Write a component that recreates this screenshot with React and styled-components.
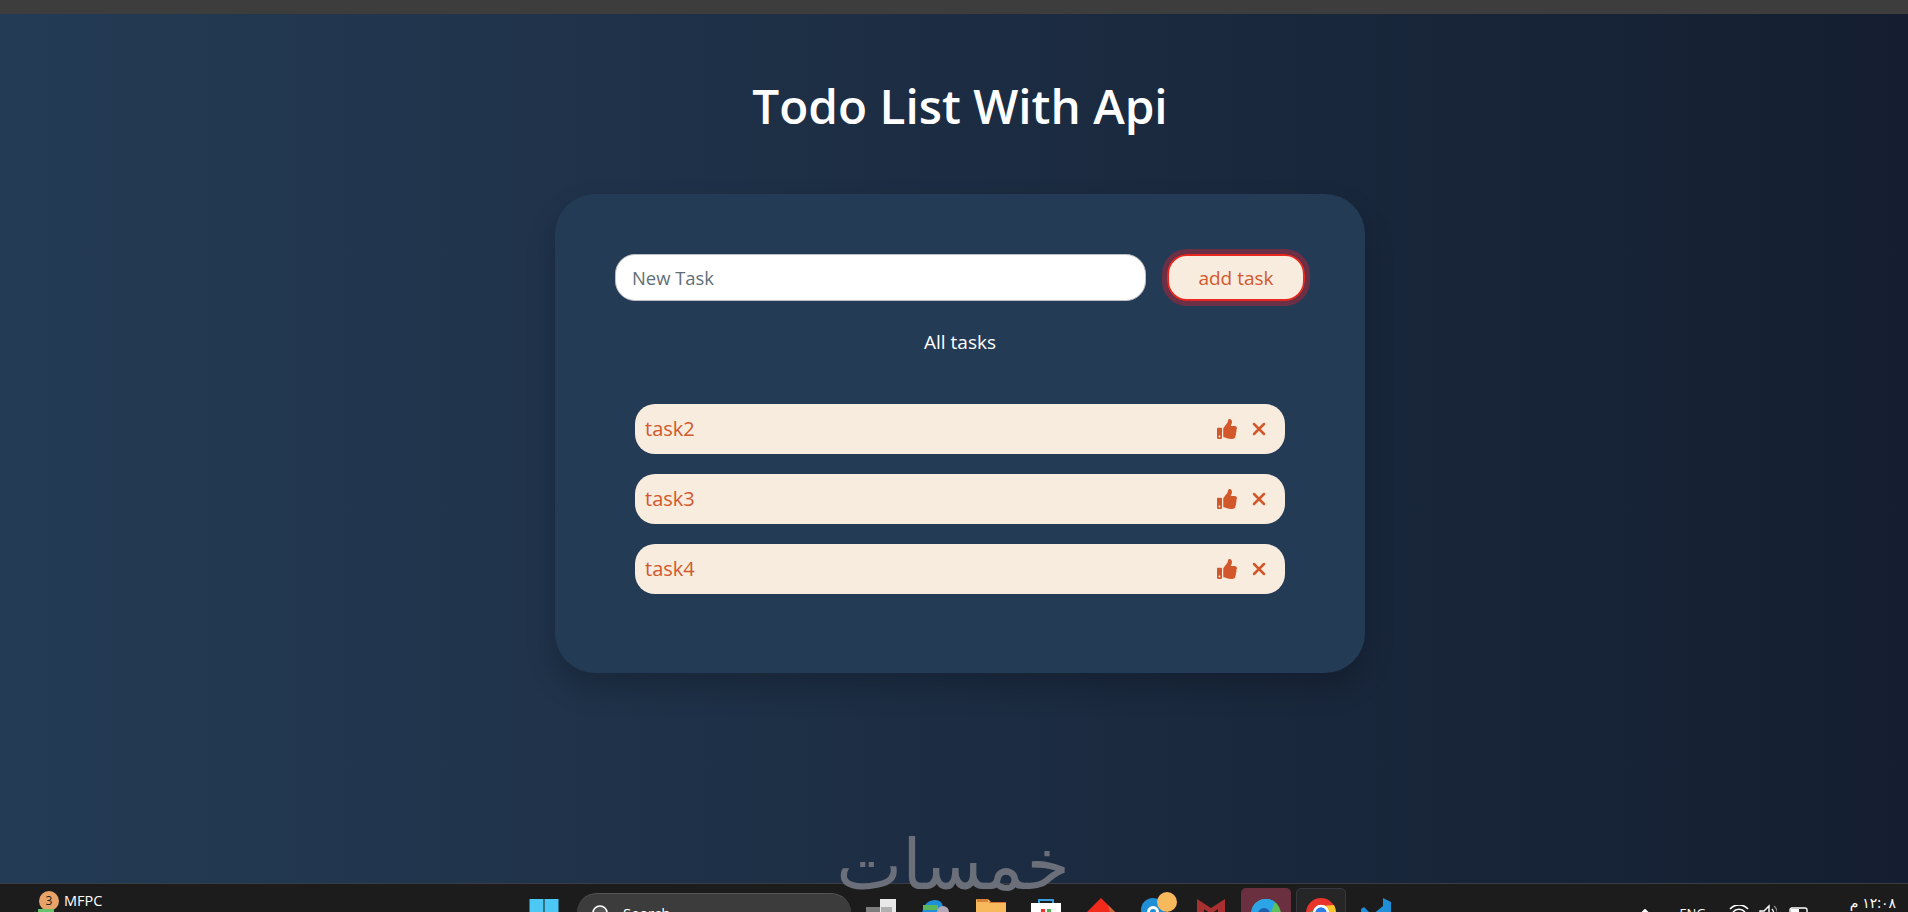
import React from 'react';
import styled, { createGlobalStyle } from 'styled-components';
import { FaThumbsUp } from 'react-icons/fa';
import { X } from 'lucide-react';

const GlobalStyle = createGlobalStyle`
  html, body { margin: 0; padding: 0; height: 100%; overflow: hidden; }
  body { font-family: "Open Sans", "Noto Sans", "Liberation Sans", sans-serif; }
  * { box-sizing: border-box; }
`;

const Page = styled.div`
  height: 912px;
  display: flex;
  flex-direction: column;
  overflow: hidden;
`;

const TopBar = styled.div`
  height: 14px;
  flex: none;
  background: #3c3d3c;
`;

const Main = styled.main`
  flex: 1;
  position: relative;
  display: flex;
  flex-direction: column;
  align-items: center;
  padding-left: 12px;
  background: linear-gradient(to right, #243b55, #141e30);
`;

const Title = styled.h1`
  margin: 59px 0 55px;
  font-size: 47.7px;
  line-height: 66px;
  font-weight: 600;
  color: #fff;
`;

const Card = styled.section`
  width: 810px;
  height: 479px;
  padding: 60px;
  border-radius: 40px;
  background: #243b55;
  box-shadow: 0 15px 30px rgba(0, 0, 0, 0.2);
`;

const Form = styled.form`
  display: flex;
  gap: 21px;
`;

const Input = styled.input`
  width: 531px;
  height: 47px;
  padding: 0 16px;
  border: 1.5px solid #bdbdc2;
  border-radius: 20px;
  background: #fff;
  font: 18.4px "Open Sans", sans-serif;
  &::placeholder { color: #5f6f78; opacity: 1; }
`;

const AddButton = styled.button`
  width: 138px;
  height: 47px;
  border: 2px solid #e8281f;
  border-radius: 20px;
  outline: 5px solid #6b3046;
  background: #f8ecdf;
  color: #d2582c;
  font: 19px "Open Sans", sans-serif;
`;

const Subtitle = styled.h2`
  margin: 28px 0 48px;
  font-size: 19px;
  line-height: 27px;
  font-weight: 400;
  text-align: center;
  color: #fff;
`;

const TaskList = styled.ul`
  margin: 0 20px;
  padding: 0;
  list-style: none;
  display: flex;
  flex-direction: column;
  gap: 20px;
`;

const TaskRow = styled.li`
  height: 50px;
  padding: 0 16px 2px 10px;
  border-radius: 20px;
  background: #f8ecdf;
  display: flex;
  align-items: center;
  justify-content: space-between;
  color: #d2582c;
  font-size: 20px;
`;

const TaskActions = styled.div`
  display: flex;
  align-items: center;
  gap: 12px;
  margin-top: 2px;
`;

const Watermark = styled.div`
  position: absolute;
  left: 829px;
  top: 830px;
  width: 248px;
  text-align: center;
  direction: rtl;
  font-family: "DejaVu Sans", sans-serif;
  font-size: 70px;
  line-height: 70px;
  color: #6b6f7a;
  z-index: 2;
`;

const Taskbar = styled.footer`
  height: 29px;
  flex: none;
  display: flex;
  overflow: hidden;
  background: #1c1c1c;
  border-top: 1px solid #3a3d42;
  color: #fff;
`;

const Weather = styled.div`
  width: 519px;
  flex: none;
  position: relative;
  padding: 8px 0 0 64px;
  font-size: 14.5px;
  line-height: 18px;
`;

const Badge = styled.span`
  position: absolute;
  left: 39px;
  top: 7px;
  width: 20px;
  height: 20px;
  border-radius: 50%;
  background: #e8a468;
  color: #1c1c1c;
  font-size: 12px;
  line-height: 20px;
  text-align: center;
`;

const Centre = styled.div`
  display: flex;
  gap: 5px;
`;

const Slot = styled.div`
  width: 50px;
  height: 40px;
  flex: none;
  margin-top: 4px;
  display: flex;
  justify-content: center;
  align-items: flex-start;
  padding-top: ${p => p.$top ?? 10}px;
  border-radius: 5px;
  border: 1px solid ${p => (p.$tone === 'plain' ? '#363a3e' : 'transparent')};
  background: ${p => (p.$tone === 'active' ? '#6a3040' : p.$tone === 'plain' ? '#262626' : 'none')};
`;

const SearchPill = styled.div`
  width: 274px;
  height: 40px;
  flex: none;
  margin: 9px 0 0 3px;
  padding: 11px 0 0 15px;
  border-radius: 20px;
  border-top: 1px solid #555;
  background: #3c3c3c;
  display: flex;
  align-items: flex-start;
  gap: 15px;
  font-size: 15px;
  line-height: 18px;
`;

const SearchLabel = styled.span`
  margin-top: -1px;
`;

const Tray = styled.div`
  margin-left: auto;
  padding-right: 12px;
  display: flex;
  align-items: flex-start;
`;

const TrayItem = styled.div`
  margin-left: ${p => p.$left}px;
  padding-top: ${p => p.$top}px;
  font-size: 13px;
  line-height: 16px;
`;

const Clock = styled.div`
  margin-left: 41px;
  padding-top: 11px;
  direction: rtl;
  font-family: "Noto Sans", "DejaVu Sans", sans-serif;
  font-size: 14px;
  line-height: 16px;
`;

const tasks = ['task2', 'task3', 'task4'];

function Ic({ w = 30, h = 30, children }) {
  return (
    <svg width={w} height={h} viewBox={`0 0 ${w} ${h}`} style={{ display: 'block', flex: 'none' }}>
      {children}
    </svg>
  );
}

export default function App() {
  return (
    <Page>
      <GlobalStyle />
      <TopBar />
      <Main>
        <Title>Todo List With Api</Title>
        <Card>
          <Form onSubmit={e => e.preventDefault()}>
            <Input placeholder="New Task" />
            <AddButton type="submit">add task</AddButton>
          </Form>
          <Subtitle>All tasks</Subtitle>
          <TaskList>
            {tasks.map(t => (
              <TaskRow key={t}>
                {t}
                <TaskActions>
                  <FaThumbsUp size={20} color="#d2582c" />
                  <X size={20} color="#d2582c" strokeWidth={3} />
                </TaskActions>
              </TaskRow>
            ))}
          </TaskList>
        </Card>
      </Main>
      <Watermark>خمسات</Watermark>
      <Taskbar>
        <Weather>
          <Badge>3</Badge>
          <svg width="24" height="10" viewBox="0 0 24 10" style={{ position: 'absolute', left: 32, top: 24 }}>
            <path d="M0 10 L3 3 L6 10Z" fill="#4caf50" />
            <rect x="6" y="1" width="16" height="9" fill="#63c46b" />
          </svg>
          MFPC
        </Weather>
        <Centre>
          <Slot $top={10}>
            <Ic>
              <rect x="0.5" y="0" width="14" height="14" fill="#4cc8f4" />
              <rect x="15.5" y="0" width="14" height="14" fill="#4cc8f4" />
            </Ic>
          </Slot>
          <SearchPill>
            <Ic w={16} h={16}>
              <circle cx="8" cy="8" r="7" fill="#555" stroke="#fff" strokeWidth="1.6" />
            </Ic>
            <SearchLabel>Search</SearchLabel>
          </SearchPill>
          <Slot $top={10}>
            <Ic>
              <rect x="14" y="0" width="16" height="30" fill="#e8e8e8" />
              <rect x="0" y="8" width="14" height="22" fill="#7c7c7c" />
              <rect x="15" y="8" width="11" height="8" fill="#b0b0b0" />
            </Ic>
          </Slot>
          <Slot $top={11}>
            <Ic w={28}>
              <path d="M0 14 C1 4 7 0 13 0 C18 0 21 3 21 8 L21 14Z" fill="#1f8fd8" />
              <rect x="1" y="5" width="15" height="5" fill="#5bb85c" />
              <rect x="1" y="10" width="15" height="4" fill="#1f8fd8" />
              <circle cx="21" cy="12" r="6" fill="#b4a8b8" />
            </Ic>
          </Slot>
          <Slot $top={10}>
            <Ic>
              <path d="M0 1 Q0 0 1 0 L12 0 L15 3 L30 3 L30 30 L0 30Z" fill="#f8b85c" />
              <rect x="1" y="0" width="11" height="3" fill="#d9823a" />
              <rect x="13" y="3" width="17" height="1" fill="#d9703a" />
            </Ic>
          </Slot>
          <Slot $top={10}>
            <Ic>
              <path d="M8 4 L8 1 L22 1 L22 4" fill="none" stroke="#3aa0e0" strokeWidth="2" />
              <rect x="0" y="4" width="30" height="26" fill="#fff" />
              <rect x="10" y="10" width="4" height="6" fill="#e33" />
              <rect x="16" y="10" width="4" height="6" fill="#4caf50" />
            </Ic>
          </Slot>
          <Slot $top={9}>
            <Ic>
              <path d="M15 0 L30 15 L0 15Z" fill="#f22a1c" />
              <path d="M22 7 L30 15 L24 15Z" fill="#c8683c" />
            </Ic>
          </Slot>
          <Slot $top={3}>
            <Ic w={42} h={34}>
              <circle cx="18" cy="18" r="12" fill="#1f8fd8" />
              <circle cx="18" cy="20" r="6" fill="#fff" />
              <circle cx="18" cy="20" r="3" fill="#1f8fd8" />
              <circle cx="32" cy="10" r="10" fill="#f8b85c" />
            </Ic>
          </Slot>
          <Slot $top={10}>
            <Ic w={28}>
              <path d="M0 0 L14 9 L28 0 L28 30 L21 30 L21 10 L14 15 L7 10 L7 30 L0 30Z" fill="#a83030" />
            </Ic>
          </Slot>
          <Slot $tone="active" $top={10}>
            <Ic>
              <circle cx="15" cy="15" r="15" fill="#5cc05c" />
              <path d="M0 15 A15 15 0 0 1 24 3 L20 13 L20 30 L0 30Z" fill="#2ba5e8" />
              <circle cx="13" cy="15" r="6" fill="#1a5fa8" />
            </Ic>
          </Slot>
          <Slot $tone="plain" $top={9}>
            <Ic>
              <circle cx="15" cy="15" r="15" fill="#e8342a" />
              <path d="M0 15 L9 12 L15 30 L0 30Z" fill="#45a84b" />
              <path d="M15 8 L28 7 A15 15 0 0 1 30 15 L30 30 L20 30Z" fill="#f8c52c" />
              <circle cx="15" cy="15" r="7" fill="#2a7de8" stroke="#fff" strokeWidth="2.5" />
            </Ic>
          </Slot>
          <Slot $top={9}>
            <Ic>
              <path d="M22 0 L30 4 L30 30 L22 30 L22 8 L11 17 L3 9 L0 11 L0 30 L22 30" fill="#1f8fd8" />
            </Ic>
          </Slot>
        </Centre>
        <Tray>
          <TrayItem $left={0} $top={25}>
            <Ic w={16} h={8}>
              <path d="M2 7 L8 1 L14 7" fill="none" stroke="#fff" strokeWidth="2" />
            </Ic>
          </TrayItem>
          <TrayItem $left={26} $top={21}>ENG</TrayItem>
          <TrayItem $left={23} $top={21}>
            <Ic w={20} h={20}>
              <path d="M1 7 A12 12 0 0 1 19 7" fill="none" stroke="#fff" strokeWidth="1.6" transform="translate(0 -3)" />
              <path d="M4 7 A8 8 0 0 1 16 7" fill="none" stroke="#fff" strokeWidth="1.6" />
              <path d="M7 10 A4 4 0 0 1 13 10" fill="none" stroke="#fff" strokeWidth="1.6" />
            </Ic>
          </TrayItem>
          <TrayItem $left={10} $top={20}>
            <Ic w={18} h={20}>
              <path d="M1 7 L5 7 L10 2 L10 16 L5 11 L1 11Z" fill="none" stroke="#fff" strokeWidth="1.4" />
              <path d="M13 5 A6 6 0 0 1 13 13" fill="none" stroke="#fff" strokeWidth="1.4" />
              <path d="M15 2 A9 9 0 0 1 15 16" fill="none" stroke="#888" strokeWidth="1.2" />
            </Ic>
          </TrayItem>
          <TrayItem $left={12} $top={23}>
            <Ic w={20} h={14}>
              <rect x="1" y="1" width="17" height="12" rx="2" fill="none" stroke="#fff" strokeWidth="1.4" />
              <rect x="2" y="2" width="8" height="10" fill="#fff" />
            </Ic>
          </TrayItem>
          <Clock>۱۲:۰۸ م</Clock>
        </Tray>
      </Taskbar>
    </Page>
  );
}
